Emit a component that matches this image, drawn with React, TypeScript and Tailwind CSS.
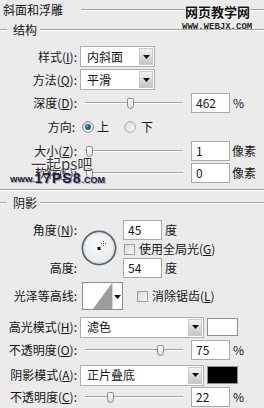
import React from "react";

const Etch = ({ className = "" }: { className?: string }) => (
  <div className={"flex flex-col " + className}>
    <div className="h-px bg-[#a4a4a4]" />
    <div className="h-px bg-white" />
  </div>
);

const Label = ({ children, className = "" }: { children: React.ReactNode; className?: string }) => (
  <div className={"w-[77px] shrink-0 text-right whitespace-nowrap " + className}>{children}</div>
);

const Arrow = () => (
  <svg width="7" height="4" viewBox="0 0 7 4">
    <polygon points="0,0 7,0 3.5,4" fill="#111" />
  </svg>
);

const Select = ({ text, className = "" }: { text: string; className?: string }) => (
  <div className={"ml-[3px] flex items-center h-[21px] border border-[#adadad] bg-white " + className}>
    <span className="pl-[6px]">{text}</span>
    <div className="ml-auto mr-px w-[14px] h-[17px] bg-linear-to-b from-[#f5f5f5] to-[#c4c4c4] border border-[#cacaca] flex items-center justify-center">
      <Arrow />
    </div>
  </div>
);

const Input = ({ v, className = "" }: { v: string; className?: string }) => (
  <div className={"h-[20px] w-[39px] shrink-0 border border-[#a9a9a9] bg-white flex items-center pl-[4px] " + className}>
    {v}
  </div>
);

const Slider = ({ thumb }: { thumb: string }) => (
  <div className="relative ml-[8px] w-[98px] h-[14px] flex items-center shrink-0">
    <div className="w-full">
      <Etch />
    </div>
    <div
      className={
        "absolute top-[2px] w-[7px] h-[11px] border border-[#8a8a8a] bg-linear-to-b from-[#fbfbfb] to-[#dcdcdc] rounded-t-[2px] rounded-b-[4px] " +
        thumb
      }
    />
  </div>
);

const Check = ({ className = "" }: { className?: string }) => (
  <div className={"w-[11px] h-[11px] border border-[#9c9c9c] bg-linear-to-br from-[#d8d8d8] to-[#f8f8f8] shrink-0 " + className} />
);

const Radio = ({ on }: { on?: boolean }) => (
  <svg width="12" height="12" viewBox="0 0 12 12" className="shrink-0">
    <defs>
      <linearGradient id={on ? "rg1" : "rg2"} x1="0" y1="0" x2="1" y2="1">
        <stop offset="0" stopColor="#d6d6d6" />
        <stop offset="1" stopColor="#ffffff" />
      </linearGradient>
    </defs>
    <circle cx="6" cy="6" r="5.3" fill={`url(#${on ? "rg1" : "rg2"})`} stroke={on ? "#6e8aa6" : "#a8a8a8"} strokeWidth="1" />
    {on && <circle cx="6" cy="6" r="3" fill="#2c5f7a" />}
    {on && <circle cx="5.2" cy="5.2" r="1" fill="#7fb3cc" />}
  </svg>
);

const Row = ({ children, className = "" }: { children: React.ReactNode; className?: string }) => (
  <div className={"flex items-center " + className}>{children}</div>
);

export default function App() {
  return (
    <div className="relative w-[264px] h-[408px] overflow-hidden bg-[#ebebeb] text-[#151515] text-[12px] leading-[14px] font-['Noto_Sans_CJK_SC','Noto_Sans',sans-serif]">
      {/* header */}
      <Row className="h-[20px]">
        <span className="pl-[3px]">斜面和浮雕</span>
        <Etch className="flex-1 ml-[18px]" />
      </Row>
      {/* 结构 */}
      <Row className="h-[20px]">
        <Etch className="w-[7px]" />
        <span className="ml-[6px] mr-[3px]">结构</span>
        <Etch className="flex-1" />
      </Row>

      <Row className="mt-[5px] h-[23px]">
        <Label>
          样式(<u>I</u>):
        </Label>
        <Select text="内斜面" className="w-[75px]" />
      </Row>
      <Row className="h-[23px]">
        <Label>
          方法(<u>Q</u>):
        </Label>
        <Select text="平滑" className="w-[75px]" />
      </Row>
      <Row className="h-[23px]">
        <Label>
          深度(<u>D</u>):
        </Label>
        <Slider thumb="left-[42px]" />
        <Input v="462" className="ml-[8px]" />
        <span className="ml-[3px]">%</span>
      </Row>
      <Row className="h-[25px]">
        <Label className="pr-[2px]">方向:</Label>
        <div className="ml-[5px] flex items-center">
          <Radio on />
          <span className="ml-[3px]">上</span>
          <div className="ml-[15px]">
            <Radio />
          </div>
          <span className="ml-[5px]">下</span>
        </div>
      </Row>
      <Row className="h-[23px]">
        <Label>
          大小(<u>Z</u>):
        </Label>
        <Slider thumb="left-[1px]" />
        <Input v="1" className="ml-[8px]" />
        <span className="ml-[2px]">像素</span>
      </Row>
      <Row className="h-[22px]">
        <Label>
          软化(<u>F</u>):
        </Label>
        <Slider thumb="left-[1px]" />
        <Input v="0" className="ml-[8px]" />
        <span className="ml-[2px]">像素</span>
      </Row>

      <Etch className="mt-[5px]" />

      {/* 阴影 */}
      <Row className="mt-[2px] h-[20px]">
        <Etch className="w-[7px]" />
        <span className="ml-[6px] mr-[3px]">阴影</span>
        <Etch className="flex-1" />
      </Row>

      <div className="flex mt-[7px]">
        <div className="w-[77px] shrink-0 flex flex-col justify-between h-[58px]">
          <div className="h-[20px] flex items-center justify-end">
            角度(<u>N</u>):
          </div>
          <div className="h-[20px] flex items-center justify-end">高度:</div>
        </div>
        <div className="w-[46px] shrink-0 pl-[4px] pt-[10px]">
          <svg width="36" height="36" viewBox="0 0 36 36">
            <defs>
              <radialGradient id="cg" cx="0.45" cy="0.4" r="0.7">
                <stop offset="0" stopColor="#fafafa" />
                <stop offset="1" stopColor="#e4e6e8" />
              </radialGradient>
            </defs>
            <circle cx="18" cy="18" r="16.6" fill="url(#cg)" stroke="#5c6670" strokeWidth="1.8" />
            <circle cx="18" cy="18" r="15.2" fill="none" stroke="#d0d4d8" strokeWidth="0.8" />
            <rect x="16.5" y="17" width="3" height="3" fill="#111" />
            <line x1="22.5" y1="11" x2="22.5" y2="16" stroke="#555" strokeWidth="1" strokeDasharray="1 1" />
            <line x1="20" y1="13.5" x2="25" y2="13.5" stroke="#555" strokeWidth="1" strokeDasharray="1 1" />
          </svg>
        </div>
        <div className="flex flex-col">
          <div className="h-[20px] flex items-center">
            <Input v="45" />
            <span className="ml-[3px]">度</span>
          </div>
          <div className="h-[18px] flex items-center">
            <Check className="ml-[1px]" />
            <span className="ml-[4px]">
              使用全局光(<u>G</u>)
            </span>
          </div>
          <div className="h-[20px] flex items-center">
            <Input v="54" />
            <span className="ml-[3px]">度</span>
          </div>
        </div>
      </div>

      <Row className="mt-[4px] h-[28px]">
        <Label>光泽等高线:</Label>
        <svg width="41" height="28" viewBox="0 0 41 28" className="ml-[5px] shrink-0">
          <rect x="0.5" y="0.5" width="40" height="27" fill="#fff" stroke="#8c8c8c" />
          <polygon points="11,27 30,1 30,27" fill="#9d9d9d" />
          <line x1="30.5" y1="1" x2="30.5" y2="27" stroke="#d8d8d8" />
          <polygon points="32,13 39,13 35.5,17" fill="#111" />
        </svg>
        <Check className="ml-[14px]" />
        <span className="ml-[4px]">
          消除锯齿(<u>L</u>)
        </span>
      </Row>

      <Row className="mt-[6px] h-[22px]">
        <Label>
          高光模式(<u>H</u>):
        </Label>
        <Select text="滤色" className="w-[124px]" />
        <div className="ml-[3px] w-[31px] h-[18px] border border-[#8e8e8e] bg-white" />
      </Row>
      <Row className="h-[23px]">
        <Label>
          不透明度(<u>O</u>):
        </Label>
        <Slider thumb="left-[72px]" />
        <Input v="75" className="ml-[8px]" />
        <span className="ml-[3px]">%</span>
      </Row>
      <Row className="mt-[3px] h-[22px]">
        <Label>
          阴影模式(<u>A</u>):
        </Label>
        <Select text="正片叠底" className="w-[124px]" />
        <div className="ml-[3px] w-[31px] h-[18px] border border-[#8e8e8e] bg-black" />
      </Row>
      <Row className="h-[22px]">
        <Label>
          不透明度(<u>C</u>):
        </Label>
        <Slider thumb="left-[22px]" />
        <Input v="22" className="ml-[8px]" />
        <span className="ml-[3px]">%</span>
      </Row>

      {/* watermarks */}
      <div className="absolute left-[185px] top-[4px] text-[13px] leading-[15px] font-bold tracking-[0px] text-[#111] [text-shadow:0_0_2px_#fff,0_0_2px_#fff,0_0_2px_#fff]">
        网页教学网
      </div>
      <div className="absolute left-[182px] top-[23px] text-[9px] leading-[9px] font-bold font-['Liberation_Mono',monospace] text-[#222] [text-shadow:0_0_1px_#fff,0_0_1px_#fff]">
        WWW.WEBJX.COM
      </div>
      <div className="absolute left-[31px] top-[156px] text-[15px] leading-[16px] text-[#3a3a3a] [text-shadow:0_0_2px_#fff,0_0_2px_#fff]">
        一起ps吧
      </div>
      <div className="absolute left-[10px] top-[172px] flex items-end font-['Liberation_Sans',sans-serif] text-[#1c1c44] [text-shadow:1px_1px_1px_#9a9a9a]">
        <span className="text-[8px] leading-[8px] font-bold">WWW.</span>
        <span className="text-[14px] leading-[12px] font-black tracking-[1px]">17PS8</span>
        <span className="text-[9px] leading-[8px] font-bold">.COM</span>
      </div>
    </div>
  );
}
